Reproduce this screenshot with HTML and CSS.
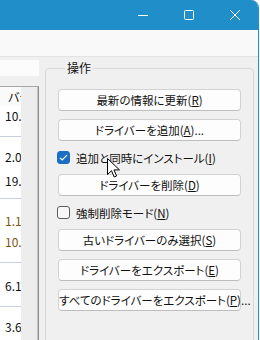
FILE: index.html
```html
<!DOCTYPE html>
<html lang="ja">
<head>
  <meta charset="UTF-8">
  <title>ドライバー</title>
  <link rel="stylesheet" href="styles.css">
</head>
<body>

<div class="window">
  <div class="titlebar">
    <span class="ctl">
      <svg width="12" height="12" viewBox="0 0 12 12"><path d="M1 6.5h10" stroke="#fff" stroke-width="1"/></svg>
    </span>
    <span class="ctl">
      <svg width="12" height="12" viewBox="0 0 12 12"><rect x="1.5" y="1.5" width="9" height="9" rx="1" fill="none" stroke="#fff" stroke-width="1"/></svg>
    </span>
    <span class="ctl">
      <svg width="12" height="12" viewBox="0 0 12 12"><path d="M1 1l10 10M11 1L1 11" stroke="#fff" stroke-width="1"/></svg>
    </span>
  </div>

  <div class="toolbar"></div>

  <div class="content">
    <div class="left">
      <div class="search"></div>
      <div class="list">
        <div class="col">
          <div class="list-head">バージョン</div>
          <div class="row row-a"><span>10.</span></div>
          <div class="row row-b"><span>2.0</span><span>19.</span></div>
          <div class="row row-c old"><span>1.1</span><span>10.</span></div>
          <div class="row row-d"><span>6.1</span></div>
          <div class="row row-e"><span>3.6</span></div>
        </div>
        <div class="track"></div>
      </div>
    </div>

    <fieldset class="group">
      <legend>操作</legend>
      <button class="btn">最新の情報に更新(<u>R</u>)</button>
      <button class="btn">ドライバーを追加(<u>A</u>)...</button>
      <label class="check">
        <span class="box checked"><svg width="9" height="9" viewBox="0 0 9 9"><path d="M1 4.8l2.2 2.2L8 2.2" fill="none" stroke="#fff" stroke-width="1.2"/></svg></span>
        <span>追加と同時にインストール(<u>I</u>)</span>
      </label>
      <button class="btn">ドライバーを削除(<u>D</u>)</button>
      <label class="check">
        <span class="box"></span>
        <span>強制削除モード(<u>N</u>)</span>
      </label>
      <button class="btn">古いドライバーのみ選択(<u>S</u>)</button>
      <button class="btn">ドライバーをエクスポート(<u>E</u>)</button>
      <button class="btn">すべてのドライバーをエクスポート(<u>P</u>)...</button>
    </fieldset>
  </div>

  <svg class="cursor" width="13" height="21" viewBox="0 0 13 21">
    <path d="M0.5 0.5v16l4-3.8 2.7 6.3 2.4-1-2.6-6.1h5.5z" fill="#fff" stroke="#000" stroke-width="1" stroke-linejoin="round"/>
  </svg>
</div>

</body>
</html>
```

FILE: styles.css
```css
body {
  margin: 0;
  background: #fff;
  font-family: "Noto Sans CJK JP", "Noto Sans", sans-serif;
  font-size: 11.5px;
  font-feature-settings: "palt";
  color: #111;
  overflow: hidden;
}

.window {
  position: relative;
  width: 258px;
  height: 340px;
  border-right: 1px solid #1f8ec9;
  border-top-right-radius: 8px;
  overflow: hidden;
  background: #f0f0f0;
}

.titlebar {
  height: 30px;
  background: #1f8ec9;
  display: flex;
  justify-content: flex-end;
}

.ctl {
  width: 46px;
  display: flex;
  align-items: center;
  justify-content: center;
}

.toolbar {
  height: 26px;
  background: #f9f9f9;
  border-bottom: 1px solid #e3e3e3;
}

.content {
  display: flex;
}

.left {
  width: 39px;
  margin-right: 6px;
}

.search {
  height: 16px;
  margin-top: 3px;
  background: #fcfcfc;
}

.list {
  margin-top: 10px;
  height: 260px;
  display: flex;
  border-top: 1px solid #a8a8a8;
  border-right: 1px solid #8f8f8f;
}

.col {
  width: 21px;
  background: #fff;
  overflow: hidden;
  white-space: nowrap;
  font-size: 12px;
}

.track {
  flex: 1;
  background: #ededed;
  border-right: 1px solid #c4c4c4;
}

.list-head {
  height: 19px;
  line-height: 19px;
  padding-left: 8px;
  background: #fafafa;
  overflow: hidden;
}

.row {
  display: flex;
  flex-direction: column;
  padding-left: 5px;
  border-top: 1px solid #c7d0dc;
  line-height: 14px;
}

.row-a {
  border-top: none;
  height: 30px;
  padding-top: 3px;
  box-sizing: border-box;
}

.row-b {
  height: 62px;
  padding-top: 13px;
  box-sizing: border-box;
  gap: 10px;
}

.row-c {
  height: 64px;
  padding-top: 15px;
  box-sizing: border-box;
  gap: 7px;
}

.row-d {
  height: 44px;
  padding-top: 16px;
  box-sizing: border-box;
}

.row-e {
  padding-top: 13px;
}

.old {
  color: #7b5410;
}

.group {
  flex: 1;
  margin: 4px 4px 0 0;
  padding: 14px 12px 0 12px;
  border: 1px solid #d8d8d8;
  border-radius: 4px;
  display: flex;
  flex-direction: column;
  gap: 8px;
  min-width: 0;
}

.group legend {
  margin-left: 7px;
  padding: 0 2px;
  line-height: 14px;
  font-size: 12px;
}

.btn {
  height: 22px;
  padding: 0;
  font-family: inherit;
  font-size: 11.5px;
  font-feature-settings: "palt";
  color: #111;
  background: #fdfdfd;
  border: 1px solid #d2d2d2;
  border-bottom-color: #bdbdbd;
  border-radius: 4px;
  white-space: nowrap;
}

.btn u, .check u {
  text-underline-offset: 1px;
}

.check {
  height: 17px;
  display: flex;
  align-items: center;
  gap: 6px;
  margin-left: -1px;
  white-space: nowrap;
}

.box {
  width: 11px;
  height: 11px;
  border: 1px solid #5c5c5c;
  border-radius: 3px;
  background: #f7f7f7;
  display: flex;
  align-items: center;
  justify-content: center;
}

.box.checked {
  background: #1b6fc3;
  border-color: #1b6fc3;
}

.cursor {
  position: absolute;
  left: 107px;
  top: 158px;
}
```
